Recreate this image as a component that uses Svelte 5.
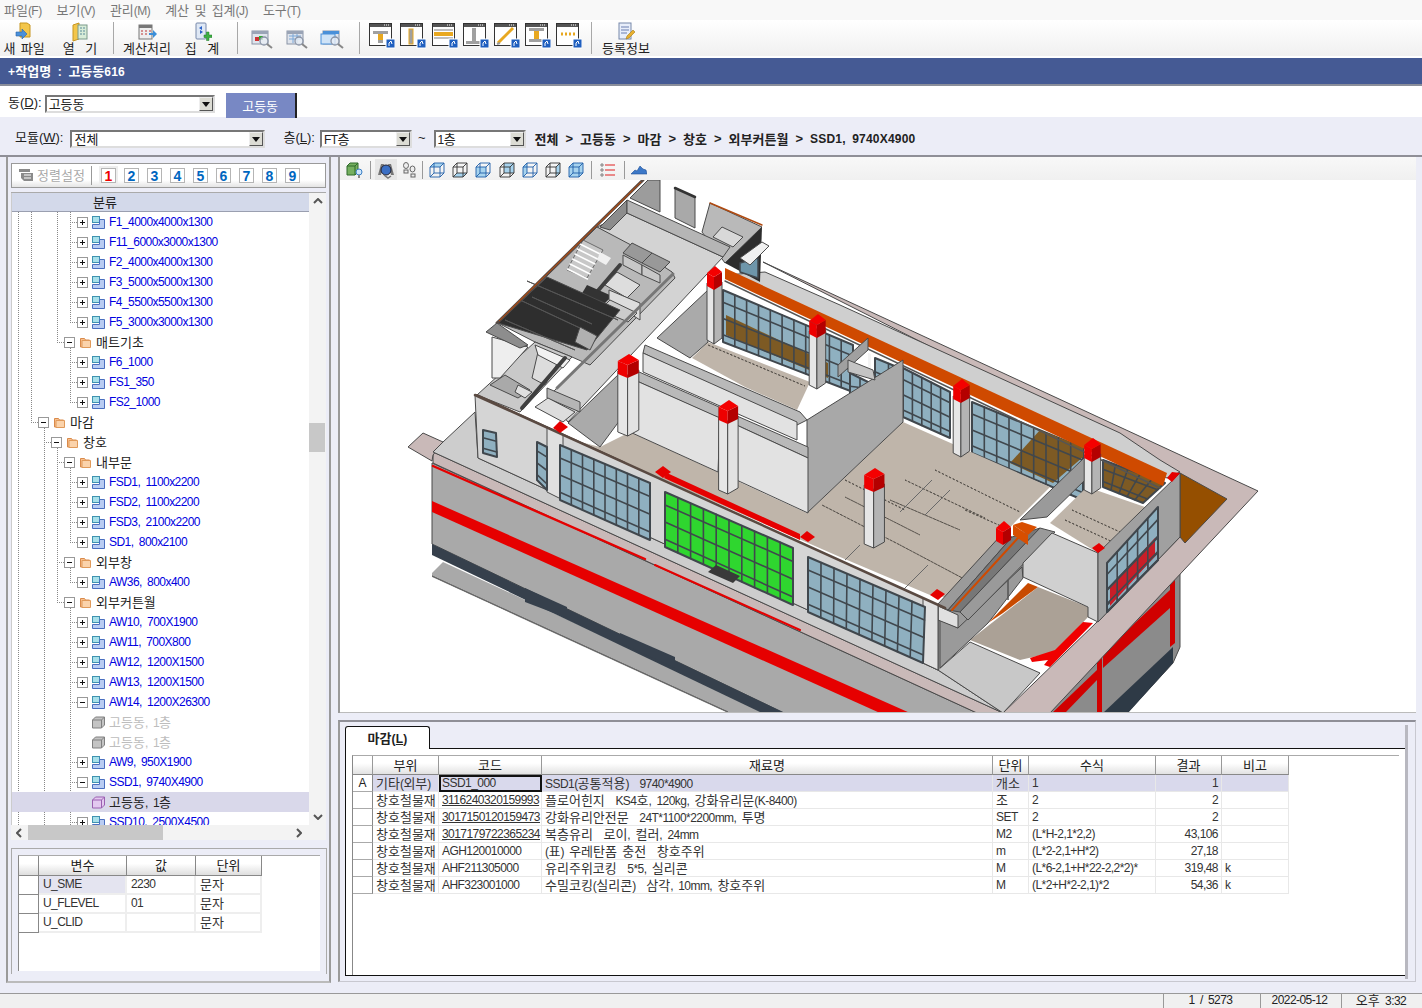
<script>
  const menus = ['파일(F)', '보기(V)', '관리(M)', '계산 및 집계(J)', '도구(T)'];

  // toolbar layout: w = cell width, kind decides the drawing
  const tools = [
    { w: 48, kind: 'newfile', label: '새 파일' },
    { w: 64, kind: 'open', label: '열  기' },
    { w: 2, kind: 'sep' },
    { w: 66, kind: 'calc', label: '계산처리' },
    { w: 44, kind: 'sum', label: '집  계' },
    { w: 14, kind: 'sep' },
    { w: 48, kind: 'find', n: 0 },
    { w: 22, kind: 'find', n: 1 },
    { w: 50, kind: 'find', n: 2 },
    { w: 2, kind: 'sep' },
    { w: 42, kind: 'win', n: 0 },
    { w: 20, kind: 'win', n: 1 },
    { w: 44, kind: 'win', n: 2 },
    { w: 18, kind: 'win', n: 3 },
    { w: 44, kind: 'win', n: 4 },
    { w: 18, kind: 'win', n: 5 },
    { w: 44, kind: 'win', n: 6 },
    { w: 2, kind: 'sep' },
    { w: 68, kind: 'info', label: '등록정보' }
  ];

  const crumbs = ['전체', '고등동', '마감', '창호', '외부커튼월', 'SSD1, 9740X4900'];

  const L = (t, x = '+') => ({ d: 3, k: 'leaf', t, x });
  const F = (d, t) => ({ d, k: 'folder', t, x: '-' });
  const rows = [
    L('F1_4000x4000x1300'), L('F11_6000x3000x1300'), L('F2_4000x4000x1300'), L('F3_5000x5000x1300'),
    L('F4_5500x5500x1300'), L('F5_3000x3000x1300'), F(2, '매트기초'), L('F6_1000'), L('FS1_350'), L('FS2_1000'),
    F(0, '마감'), F(1, '창호'), F(2, '내부문'), L('FSD1, 1100x2200'), L('FSD2, 1100x2200'), L('FSD3, 2100x2200'),
    L('SD1, 800x2100'), F(2, '외부창'), L('AW36, 800x400'), F(2, '외부커튼월'), L('AW10, 700X1900'),
    L('AW11, 700X800'), L('AW12, 1200X1500'), L('AW13, 1200X1500'), L('AW14, 1200X26300', '-'),
    { d: 3, k: 'cube', t: '고등동, 1층', off: true }, { d: 3, k: 'cube', t: '고등동, 1층', off: true },
    L('AW9, 950X1900'), L('SSD1, 9740X4900', '-'), { d: 3, k: 'cube', t: '고등동, 1층', sel: true },
    L('SSD10, 2500X4500')
  ];

  // dotted guide lines of the tree: [x, y1, y2]
  const guides = [
    [6, 0, 625], [19, 0, 210], [32, 216, 625], [45, 0, 130], [45, 236, 390],
    [58, 0, 110], [58, 136, 190], [58, 256, 330], [58, 356, 370], [58, 396, 625]
  ];
  const links = rows
    .map((r, i) => ({ r, y: 10 + 20 * i }))
    .filter((o) => o.r.x)
    .map((o) => ({ x1: 66 - (3 - o.r.d) * 13 - 8, x2: 66 - (3 - o.r.d) * 13, y: o.y }));

  const vars = [
    ['U_SME', '2230', '문자'],
    ['U_FLEVEL', '01', '문자'],
    ['U_CLID', '', '문자']
  ];

  const items = [
    ['A', '기타(외부)', 'SSD1_000', 'SSD1(공통적용)  9740*4900', '개소', '1', '1', ''],
    ['', '창호철물재', '3116240320159993', '플로어힌지  KS4호, 120kg, 강화유리문(K-8400)', '조', '2', '2', ''],
    ['', '창호철물재', '3017150120159473', '강화유리안전문  24T*1100*2200mm, 투명', 'SET', '2', '2', ''],
    ['', '창호철물재', '3017179722365234', '복층유리  로이, 컬러, 24mm', 'M2', '(L*H-2,1*2,2)', '43,106', ''],
    ['', '창호철물재', 'AGH120010000', '(표) 우레탄폼 충전  창호주위', 'm', '(L*2-2,1+H*2)', '27,18', ''],
    ['', '창호철물재', 'AHF211305000', '유리주위코킹  5*5, 실리콘', 'M', '(L*6-2,1+H*22-2,2*2)*', '319,48', 'k'],
    ['', '창호철물재', 'AHF323001000', '수밀코킹(실리콘)  삼각, 10mm, 창호주위', 'M', '(L*2+H*2-2,1)*2', '54,36', 'k']
  ];

  const runs = (s) => (s.match(/[가-힣]+|[^가-힣]+/g) || []).map((p) => ({ s: p, ko: /[가-힣]/.test(p) }));

  // ----- 3D view, painted back to front -----
  const P = (f, p, s = '#4a4a4a', w = 1, dash = '') => ({ f, p, s, w, dash });
  const N = (f, p) => P(f, p, 'none', 0);
  const D = (p) => P('none', p, '#55504a', 1, '2 2');

  // a = top left, b = top right, c = bottom right, d = bottom left
  function win(a, b, c, d, cols, rows, fill = '#8fb0c0', over = '') {
    const mix = (p, q, t) => [p[0] + (q[0] - p[0]) * t, p[1] + (q[1] - p[1]) * t];
    const txt = (p) => p[0].toFixed(1) + ',' + p[1].toFixed(1);
    const out = [P(fill, [a, b, c, d].map(txt).join(' '), '#40474d', 2)];
    if (over) out.push(N('#7d5a24', over));
    for (let i = 1; i < cols; i++) out.push(P('none', txt(mix(a, b, i / cols)) + ' ' + txt(mix(d, c, i / cols)), '#40474d', 1.6));
    for (let i = 1; i <= rows; i++) {
      const t = (i - 0.25) / (rows + 0.2);
      out.push(P('none', txt(mix(a, d, t)) + ' ' + txt(mix(b, c, t)), '#40474d', 1.6));
    }
    return out;
  }

  function col(x, y, yb, s = 1, side = '#b4b4b4') {
    const X = (v) => x + v * s;
    const out = [];
    if (yb) {
      out.push(P('#e6e6e6', `${X(-8)},${y + 8} ${X(-1)},${y + 12} ${X(-1)},${yb + 4} ${X(-8)},${yb}`));
      out.push(P(side, `${X(-1)},${y + 12} ${X(7)},${y + 7} ${X(7)},${yb - 2} ${X(-1)},${yb + 4}`));
    }
    out.push(N('#ee0000', `${X(-8)},${y - 2} ${X(-1)},${y + 2} ${X(-1)},${y + 15} ${X(-8)},${y + 11}`));
    out.push(N('#b40000', `${X(-1)},${y + 2} ${X(7)},${y - 3} ${X(7)},${y + 10} ${X(-1)},${y + 15}`));
    out.push(N('#f40000', `${X(-8)},${y - 2} ${X(0)},${y - 9} ${X(7)},${y - 3} ${X(-1)},${y + 2}`));
    return out;
  }

  const scene = [
    // lower right outside
    P('#8b8b8b', '1050,713 1097,660 1173,577 1180,573 1180,647 1173,663 1127,713'),
    N('#2e3a46', '1103,713 1173,647 1173,663 1128,713'),
    N('#d00000', '1103,653 1170,590 1170,608 1103,668'),
    N('#d00000', '1052,713 1097,670 1097,680 1065,713'),
    N('#d00000', '1170,580 1175,577 1175,643 1170,647'),
    N('#d00000', '1097,657 1102,652 1102,713 1097,713'),
    // front body
    N('#a9a9a9', '443,562 432,573 432,577 728,713 770,713'),
    P('none', '432,576 728,712', '#666', 1),
    P('#a9a9a9', '432,463 977,713 784,713 432,544'),
    N('#36404c', '432,544 432,555 762,713 785,713'),
    N('#36404c', '525,588 567,607 567,618 525,602'),
    N('#36404c', '620,633 675,657 675,668 620,643'),
    N('#e60000', '432,501 910,713 880,713 432,512'),
    // pink plate and ledge
    P('#c9b9b8', '763,262 1258,491 1050,713 1003,713 1097,622 1180,537 1180,473'),
    P('#c9b9b8', '433,452 1003,713 977,713 433,463'),
    P('#c9b9b8', '408,447 423,433 443,442 433,455 432,461'),
    P('none', '433,466 645,559', '#e60000', 2.4),
    P('none', '655,565 800,630', '#e60000', 2),
    P('#cdcdcd', '433,452 443,442 475,412 478,458 938,670 1003,713'),
    // brown pit at the far corner
    P('#954f00', '1180,473 1227,499 1185,543 1180,537'),
    // top gray slab
    P('#cfcfcf', '765,272 840,305 1000,378 1120,433 1160,460 1180,472 1167,478 725,275'),
    // big room back windows
    ...win([903, 368], [950, 392], [950, 438], [903, 417], 5, 3),
    ...win([972, 402], [1083, 448], [1083, 500], [972, 453], 9, 3, '#8fb0c0', '1010,463 1040,430 1083,447 1083,457 1053,483'),
    ...win([723, 290], [853, 345], [853, 392], [723, 342], 11, 3, '#8fb0c0', '726,315 828,363 828,378 726,335'),
    ...win([1103, 460], [1165, 483], [1143, 503], [1103, 487], 5, 2, '#7d5a24'),
    ...win([875, 358], [902, 369], [902, 392], [875, 380], 2, 1),
    N('#f4f4f4', '868,353 871,354 871,368 868,367'),
    ...win([850, 373], [870, 383], [870, 400], [850, 412], 2, 2),
    // orange band
    N('#cf4a00', '725,268 1167,473 1163,486 725,279'),
    P('none', '725,281 1160,488', '#555', 1.5),
    // floors
    N('#bfb5aa', '600,447 630,432 807,513 903,422 1050,487 1017,520 945,597 930,595 840,557 573,440'),
    N('#bfb5aa', '1050,523 1087,487 1145,507 1098,553'),
    N('#bfb5aa', '692,358 708,342 810,382 797,410 745,387'),
    D('708,345 805,386'),
    D('845,480 905,510'), D('845,497 920,535'), D('905,480 985,518'), D('935,470 1020,512'),
    D('822,505 900,545'), D('900,545 985,590'), D('890,500 960,530'), D('965,510 1010,530'),
    D('1065,520 1115,543'), D('1072,510 1120,532'),
    P('none', '928,565 898,595', '#666', 0.8), P('none', '950,490 925,515', '#666', 0.8),
    P('none', '932,480 900,512', '#666', 0.8), P('none', '860,545 845,560', '#666', 0.8),
    // room partition walls
    P('#a8a8a8', '807,420 903,360 903,422 807,513'),
    P('#9a9a9a', '1085,457 1085,480 1047,517 1020,520'),
    P('#aaaaaa', '657,338 708,290 708,342 690,358'),
    P('#aaaaaa', '568,423 620,373 620,420 600,447'),
    P('#b9b9b9', '645,345 800,412 807,420 797,425 643,353'),
    P('#e2e2e2', '643,353 797,422 797,440 643,372'),
    P('#b9b9b9', '630,368 719,407 719,418 630,378'),
    P('#e2e2e2', '630,378 720,418 718,472 630,432'),
    P('#b9b9b9', '730,413 808,447 808,458 730,422'),
    P('#e2e2e2', '730,422 808,458 808,513 730,477'),
    // small back walls
    P('#a0a0a0', '838,365 868,338 868,350 838,377'),
    P('#c4c4c4', '848,360 873,370 875,380 848,372'),
    // upper block: corridor and stair core
    P('#9c9c9c', '630,198 648,180 660,180 660,212'),
    P('#a9a9a9', '675,188 695,197 695,228 675,218'),
    P('none', '675,188 695,197', '#333', 2.5),
    P('#b9b9b9', '702,232 710,203 762,227 725,263'),
    P('#d8d8d8', '713,237 722,227 743,237 733,247'),
    N('#2d2d2d', '725,263 762,227 760,282'),
    P('none', '710,203 762,225', '#b04a10', 1.5),
    P('#6e96aa', '740,263 758,258 758,278 740,272', '#40474d', 1.5),
    P('#f0f0f0', '740,258 762,242 769,246 750,265'),
    P('#d3d3d3', '627,213 723,257 568,422 548,397 673,273 597,227'),
    P('#8c8c8c', '600,227 627,200 627,213 610,230'),
    P('#b5b5b5', '627,200 730,247 723,257 627,213'),
    P('#b9b9b9', '597,227 631,245 672,272 675,278 590,365 572,357 535,342 498,323 548,275'),
    // stairs
    P('#c8c8c8', '583,240 603,250 587,278 567,270', '#555', 0.8),
    ...[0, 1, 2, 3, 4, 5].map((i) => P('none', `${580 - i * 2.5},${244 + i * 5} ${600 - i * 2.5},${254 + i * 5}`, '#fff', 1.5)),
    N('#f0f0f0', '600,252 611,258 606,265 597,260'),
    P('none', '620,265 590,300', '#3f3f3f', 4),
    N('#333', '587,285 612,296 603,305 581,295'),
    P('#999', '623,253 632,243 652,253 642,263'),
    P('#999', '642,263 652,253 670,262 660,272'),
    P('#c8c8c8', '623,255 642,265 642,275 623,265'),
    P('#c8c8c8', '642,265 660,275 660,283 642,275'),
    P('#ddd', '617,272 640,285 627,298 605,285'),
    P('#ddd', '609,290 640,303 640,320 609,300'),
    P('#ccc', '610,300 637,313 628,322 600,310'),
    // dark roof
    P('#2e2e2e', '547,277 620,310 587,350 498,323'),
    P('none', '527,281 618,320', '#555', 1), P('none', '520,300 595,335', '#555', 1),
    P('none', '505,320 575,350', '#555', 1), P('none', '532,297 592,324', '#555', 1),
    P('#b0b0b0', '580,327 597,336 590,350 575,342'),
    P('none', '643,180 497,323', '#5a4a42', 3),
    P('none', '641,182 499,321', '#b04a10', 1),
    // lower left block
    P('#c9c9c9', '477,395 535,342 572,357 520,412'),
    P('#eeeeee', '492,337 528,347 500,378 492,378'),
    P('#8d8d8d', '486,332 497,323 528,345 520,348'),
    P('#dddddd', '538,352 558,362 545,385 532,378'),
    P('#f2f2f2', '535,345 570,360 563,368 538,355'),
    P('#a9a9a9', '505,375 530,390 518,398 490,385'),
    P('#e0e0e0', '518,385 532,392 525,398 515,392'),
    P('none', '565,358 522,408', '#3f3f3f', 4),
    P('none', '673,274 557,388', '#777', 3),
    P('#b5b5b5', '547,388 580,402 580,412 547,398'),
    P('#dddddd', '535,407 548,398 575,412 563,422'),
    P('none', '477,395 625,463', '#5a4a42', 2),
    // ramp and hall under the overhang
    P('#c8c8c8', '970,642 1040,673 1003,713 938,670'),
    N('#9a9a9a', '938,605 1023,530 1023,577 970,640 938,670'),
    N('#aba196', '970,640 1038,587 1088,607 1088,617 1055,652 1020,660'),
    N('#c84a00', '988,623 1028,583 1038,587 1003,613'),
    N('#f00000', '1083,622 1093,623 1050,667 1044,665 1048,660 1032,662 1030,658 1055,650'),
    P('#9a9a9a', '958,628 1022,567 1023,578 988,623 970,640 940,668 940,620'),
    P('none', '1008,580 1008,600', '#555', 1),
    P('#e0e0e0', '938,606 958,615 958,628 938,620'),
    P('#9a9a9a', '938,604 1003,533 1012,537 948,610'),
    P('#777777', '948,610 1012,537 1040,528 960,612'),
    P('none', '952,610 1018,538', '#cf4a00', 2),
    P('#9a9a9a', '960,612 1040,528 1055,532 968,620'),
    N('#d84e00', '1013,525 1022,522 1037,527 1028,535'),
    N('#d84e00', '1013,525 1028,535 1028,545 1013,535'),
    // right room
    P('#d0d0d0', '1052,533 1098,553 1098,622 1088,617 1088,607 1023,577 1023,563'),
    P('#a0a0a0', '1098,553 1180,473 1180,537 1098,622'),
    ...win([1107, 563], [1158, 507], [1158, 560], [1107, 612], 5, 3, '#8fb0c0', ''),
    N('#c81e28', '1110,606 1155,556 1155,538 1110,588'),
    ...win([1107, 590], [1158, 537], [1158, 560], [1107, 612], 5, 1, 'none'),
    // front wall and its windows
    P('#d5d5d5', '475,395 938,605 938,670 478,458'),
    P('#e0e0e0', '547,427 563,434 563,500 547,492'),
    P('#e0e0e0', '923,598 938,605 938,670 923,663'),
    P('none', '475,395 945,608', '#5a4a42', 2.5),
    N('#e60000', '667,473 800,534 800,540 664,478'),
    ...win([483, 430], [496, 433], [497, 457], [483, 453], 1, 2),
    ...win([537, 442], [547, 447], [547, 490], [537, 480], 1, 3),
    ...win([560, 445], [650, 483], [650, 540], [560, 500], 8, 3),
    ...win([665, 492], [793, 548], [793, 605], [665, 547], 10, 3, '#2fd62f'),
    N('#3a3a3a', '708,572 733,583 740,576 716,565'),
    ...win([808, 557], [925, 607], [923, 663], [808, 612], 9, 3),
    // columns, painted last
    ...col(715, 275, 340),
    ...col(818, 323, 385, 1.1),
    ...col(629, 363, 432, 1.4, '#e2e2e2'),
    ...col(729, 409, 490, 1.3, '#e2e2e2'),
    ...col(962, 388, 453, 1.1),
    ...col(1093, 447, 490, 1.1),
    ...col(875, 477, 544, 1.35),
    ...col(1004, 530, 0, 1),
    N('#e60000', '930,595 937,589 945,594 938,600'),
    N('#e60000', '1092,548 1099,543 1105,548 1098,553'),
    N('#e60000', '553,428 560,421 568,427 560,433'),
    N('#e60000', '655,472 663,466 671,472 663,478'),
    N('#e60000', '800,537 807,531 815,537 808,542'),
    N('#e60000', '1167,478 1172,472 1180,473 1172,482')
  ];
</script>

{#snippet t(s)}{#each runs(s) as r}<span class={r.ko ? 'ko' : 'la'}>{r.s}</span>{/each}{/snippet}

{#snippet drop(s, cls)}
  <div class="select {cls}">
    <span class="sel-text">{@render t(s)}</span>
    <span class="sel-btn"><svg width="8" height="5" viewBox="0 0 8 5"><path d="M0 0h8L4 5z" fill="#111" /></svg></span>
  </div>
{/snippet}

{#snippet toolIcon(tool)}
  {#if tool.kind === 'newfile'}
    <svg width="20" height="20" viewBox="0 0 20 20"><path d="M6 1h7l3 2v12H6z" fill="#f3c64a" stroke="#c79620" /><path d="M2 10h6V7l5 5-5 5v-3H2z" fill="#4a90d9" stroke="#2a62a8" stroke-width=".6" /></svg>
  {:else if tool.kind === 'open'}
    <svg width="20" height="20" viewBox="0 0 20 20"><path d="M3 3l6-2v16l-6 2z" fill="#f3c64a" stroke="#c79620" /><rect x="8" y="3" width="9" height="14" fill="#d8ecd8" stroke="#7a9a8a" /><path d="M10 6h5M10 9h5M10 12h5" stroke="#5a8a9a" stroke-dasharray="2 1" /></svg>
  {:else if tool.kind === 'calc'}
    <svg width="20" height="20" viewBox="0 0 20 20"><rect x="2" y="3" width="13" height="14" fill="#eee" stroke="#777" /><rect x="2" y="3" width="13" height="3" fill="#777" /><path d="M4 9h2M8 9h2M12 9h2M4 12h2M8 12h2" stroke="#b33" /><path d="M12 11h4V8l4 4-4 4v-3h-4z" fill="#3b8ed8" /></svg>
  {:else if tool.kind === 'sum'}
    <svg width="20" height="20" viewBox="0 0 20 20"><rect x="4" y="1" width="10" height="16" rx="1" fill="#dfe8f5" stroke="#7788aa" /><path d="M7 6l3-2v4zM11 10l-3 2V8z" fill="#2a62c8" /><path d="M12 13h2.500v-3h2.500v3h3v2.500h-3v3h-2.500v-3H12z" fill="#3cb043" stroke="#1d7a26" stroke-width=".5" /></svg>
  {:else if tool.kind === 'find'}
    <svg class="find-svg" width="26" height="20" viewBox="0 0 26 20"><rect x="3" y="2" width="16" height="13" fill="#dfe4ec" stroke="#8a94a6" /><rect x="3" y="2" width="16" height="3" fill={tool.n === 2 ? '#4a90d9' : '#9aa4b6'} />{#if tool.n === 0}<rect x="6" y="8" width="4" height="4" fill="#c33" /><rect x="10" y="7" width="4" height="4" fill="#3a3" />{:else if tool.n === 1}<path d="M5 7h12M5 10h12M9 5v9M13 5v9" stroke="#7aa7d8" />{:else}<rect x="1" y="5" width="14" height="10" fill="#cfe3f7" stroke="#4a90d9" />{/if}<circle cx="15" cy="12" r="4" fill="#e8eef5" fill-opacity=".8" stroke="#8a94a6" stroke-width="1.300" /><path d="M18 15l5 4" stroke="#888" stroke-width="2" /></svg>
  {:else if tool.kind === 'win'}
    <svg class="win-svg" width="26" height="26" viewBox="0 0 26 26">
      <rect x=".5" y=".5" width="22" height="22" fill="#fff" stroke="#333" />
      <rect x="1" y="1" width="21" height="3" fill="#555" />
      <path d="M15 2h1M17 2h1M19 2h1" stroke="#fff" />
      {#if tool.n === 0}<path d="M4 8h15v3h-5v9H9v-9H4z" fill="#a0a0a0" /><rect x="9" y="11" width="5" height="6" fill="#e8a820" />
      {:else if tool.n === 1}<rect x="9" y="6" width="4" height="15" fill="#a0a0a0" stroke="#e8a820" />
      {:else if tool.n === 2}<rect x="2" y="9" width="19" height="4" fill="#e8a820" /><path d="M2 7h19M2 15h19" stroke="#aaa" stroke-width="1.500" />
      {:else if tool.n === 3}<path d="M9 5h4v13h7v3H3v-3h6z" fill="#a0a0a0" />
      {:else if tool.n === 4}<path d="M4 20L19 5" stroke="#e8a820" stroke-width="3" /><path d="M3 21l3-1" stroke="#999" stroke-width="2" />
      {:else if tool.n === 5}<path d="M4 5h15v3h-5v8h5v3H4v-3h5V8H4z" fill="#a0a0a0" /><rect x="9" y="8" width="5" height="8" fill="#e8a820" />
      {:else}<path d="M5 11h2M9 11h2M13 11h2M17 11h2" stroke="#e8a820" stroke-width="3" />{/if}
      <rect x="17" y="16" width="9" height="9" fill="#1f5fbf" stroke="#fff" />
      <path d="M20 23v-3l2-2 1 3" stroke="#fff" fill="none" />
    </svg>
  {:else if tool.kind === 'info'}
    <svg width="20" height="20" viewBox="0 0 20 20"><rect x="3" y="1" width="12" height="16" fill="#e8eefa" stroke="#7788aa" /><path d="M5 5h8M5 8h8M5 11h6" stroke="#6a7fb0" /><path d="M10 17l1-3 6-6 2 2-6 6z" fill="#e8b030" stroke="#a67a10" stroke-width=".6" /></svg>
  {/if}
{/snippet}

{#snippet cubeBtn(n)}
  <svg width="16" height="16" viewBox="0 0 16 16">
    {#if n === 2}<path d="M1 5h10v10H1z" fill="#a7d3ee" />{/if}
    {#if n === 6}<path d="M1 5h10v10H1zM1 5l4-4h10l-4 4zM11 5l4-4v10l-4 4z" fill="#a7d3ee" />{/if}
    {#if n === 1}<path d="M1 15l4-4h10l-4 4z" fill="#a7d3ee" />{/if}
    {#if n === 0}<path d="M1 5l4-4h10l-4 4z" fill="#a7d3ee" />{/if}
    {#if n === 3}<path d="M5 1h10v10H5z" fill="#a7d3ee" />{/if}
    {#if n === 4}<path d="M1 5l4-4v10l-4 4z" fill="#a7d3ee" />{/if}
    {#if n === 5}<path d="M11 5l4-4v10l-4 4z" fill="#a7d3ee" />{/if}
    <path d="M1 5h10v10H1zM1 5l4-4h10v10l-4 4M11 5l4-4M5 1v10H15M5 11l-4 4" fill="none" stroke={n % 2 ? '#333' : '#1f5fa8'} stroke-width=".9" />
  </svg>
{/snippet}

<div class="app">
  <div class="menu">
    {#each menus as m}<span class="menu-item">{@render t(m)}</span>{/each}
  </div>

  <div class="toolbar">
    {#each tools as tool}
      {#if tool.kind === 'sep'}
        <div class="tool-sep" style="width:{tool.w}px"></div>
      {:else}
        <div class="tool" style="width:{tool.w}px">
          <div class="tool-icon">{@render toolIcon(tool)}</div>
          {#if tool.label}<div class="tool-label">{@render t(tool.label)}</div>{/if}
        </div>
      {/if}
    {/each}
  </div>

  <div class="title b">{@render t('+작업명 : 고등동616')}</div>

  <div class="dong-row">
    <span class="lbl">동(<u>D</u>):</span>
    {@render drop('고등동', 'sel-dong')}
    <div class="dong-tab">{@render t('고등동')}</div>
  </div>

  <div class="filter-row">
    <span class="lbl">모듈(<u>W</u>):</span>
    {@render drop('전체', 'sel-module')}
    <span class="lbl lbl-floor">층(<u>L</u>):</span>
    {@render drop('FT층', 'sel-floor')}
    <span class="lbl tilde">~</span>
    {@render drop('1층', 'sel-floor2')}
    <div class="crumbs b">
      {#each crumbs as c, i}
        {#if i > 0}<span class="crumb-sep">&gt;</span>{/if}
        <span>{@render t(c)}</span>
      {/each}
    </div>
  </div>

  <div class="main">
    <div class="left">
      <div class="sortbar">
        <svg class="sort-icon" width="18" height="16" viewBox="0 0 18 16"><path d="M1 1h11v3H1zM3 5h12v8H6l-3-3z" fill="#8a8a8a" /><path d="M6 7h7M6 10h7" stroke="#fff" /></svg>
        <span class="sort-label">{@render t('정렬설정')}</span>
        <span class="sort-sep"></span>
        {#each [1, 2, 3, 4, 5, 6, 7, 8, 9] as n}
          <span class="sort-num" class:first={n === 1}>{n}</span>
        {/each}
      </div>

      <div class="treebox">
        <div class="tree-main">
          <div class="tree-head">{@render t('분류')}</div>
          <div class="tree-body">
            <svg class="tree-lines" width="297" height="625">
              {#each guides as g}<line x1={g[0] + 0.5} x2={g[0] + 0.5} y1={g[1]} y2={g[2]} />{/each}
              {#each links as l}<line x1={l.x1} x2={l.x2} y1={l.y + 0.5} y2={l.y + 0.5} />{/each}
            </svg>
            {#each rows as r}
              <div class="row" class:sel={r.sel} class:off={r.off} class:leaf={r.k === 'leaf'} style="padding-left:{66 - (3 - r.d) * 13}px">
                <span class="box" class:none={!r.x}>
                  {#if r.x}<svg width="9" height="9" viewBox="0 0 9 9"><path d={r.x === '+' ? 'M2 4.500h5M4.500 2v5' : 'M2 4.500h5'} stroke="#111" /></svg>{/if}
                </span>
                <span class="node">
                  {#if r.k === 'folder'}
                    <svg width="13" height="13" viewBox="0 0 13 13"><path d="M1.500 2.500h4l1 1.500h4v7h-9z" fill="#f9c08e" stroke="#d98a4a" /><path d="M3 4.500h8.500v7H3z" fill="#fbd3ab" stroke="#e09a5a" /></svg>
                  {:else if r.k === 'leaf'}
                    <svg width="13" height="13" viewBox="0 0 13 13"><rect x=".5" y=".5" width="7" height="6" fill="#a8e0ea" stroke="#3f93b0" /><path d="M.5 8.500h7v-5h5v9h-12z" fill="#b9ccf2" stroke="#4a6fc0" /></svg>
                  {:else}
                    <svg width="13" height="13" viewBox="0 0 13 13"><path d="M.5 4l3-3h9v8l-3 3h-9z" fill={r.sel ? '#e3c8f0' : '#c4c4c4'} stroke={r.sel ? '#9a5fb0' : '#808080'} /><path d="M.5 4h9v8M9.500 4l3-3" fill="none" stroke={r.sel ? '#9a5fb0' : '#808080'} /></svg>
                  {/if}
                </span>
                <span class="row-text">{@render t(r.t)}</span>
              </div>
            {/each}
          </div>
        </div>
        <div class="vscroll">
          <svg width="10" height="6" viewBox="0 0 10 6"><path d="M1 5l4-4 4 4" fill="none" stroke="#555" stroke-width="2" /></svg>
          <div class="vtrack"><div class="vthumb"></div></div>
          <svg width="10" height="6" viewBox="0 0 10 6"><path d="M1 1l4 4 4-4" fill="none" stroke="#555" stroke-width="2" /></svg>
        </div>
        <div class="hscroll">
          <svg width="6" height="10" viewBox="0 0 6 10"><path d="M5 1L1 5l4 4" fill="none" stroke="#555" stroke-width="2" /></svg>
          <div class="hthumb"></div>
          <svg width="6" height="10" viewBox="0 0 6 10"><path d="M1 1l4 4-4 4" fill="none" stroke="#555" stroke-width="2" /></svg>
        </div>
      </div>

      <div class="varbox">
        <div class="vargrid">
          <div class="vrow vhead">
            <span class="vc c0"></span><span class="vc c1">{@render t('변수')}</span><span class="vc c2">{@render t('값')}</span><span class="vc c3">{@render t('단위')}</span>
          </div>
          {#each vars as v, i}
            <div class="vrow">
              <span class="vc c0 rowhead"></span>
              <span class="vc c1 data" class:cur={i === 0}>{@render t(v[0])}</span>
              <span class="vc c2 data">{@render t(v[1])}</span>
              <span class="vc c3 data">{@render t(v[2])}</span>
            </div>
          {/each}
        </div>
      </div>
    </div>

    <div class="right">
      <div class="view">
        <div class="view-tools">
          <span class="vt vt-first">
            <svg width="18" height="18" viewBox="0 0 18 18"><path d="M1 5l3-3h8v9l-3 3H1z" fill="#76b060" stroke="#2f6b2a" /><path d="M1 5h8v9M9 5l3-3" fill="none" stroke="#2f6b2a" /><circle cx="13" cy="11" r="3" fill="#cfe6fb" stroke="#3b7fc4" /><rect x="12" y="14" width="2" height="3" fill="#888" /></svg>
          </span>
          <span class="vsep"></span>
          <span class="vt vt-on">
            <svg width="18" height="18" viewBox="0 0 18 18"><path d="M4 3h3l-3 11H1zM11 3h3l3 11h-3z" fill="#777" /><circle cx="9" cy="9" r="5" fill="#3b6fc4" stroke="#223" /><path d="M7 14l4 3 3-2" fill="none" stroke="#777" stroke-width="1.500" /></svg>
          </span>
          <span class="vt vt-feet">
            <svg width="16" height="16" viewBox="0 0 16 16"><ellipse cx="5" cy="3.500" rx="2.500" ry="3" fill="#eee" stroke="#666" /><rect x="3" y="8" width="4" height="3" fill="#eee" stroke="#666" /><ellipse cx="11.500" cy="7" rx="2.500" ry="3" fill="#eee" stroke="#666" /><rect x="10" y="12" width="4" height="3" fill="#eee" stroke="#666" /></svg>
          </span>
          <span class="vsep vsep-cubes"></span>
          {#each [0, 1, 2, 3, 4, 5, 6] as n}
            <span class="vt vt-cube">{@render cubeBtn(n)}</span>
          {/each}
          <span class="vsep vsep-lines"></span>
          <span class="vt vt-lines">
            <svg width="16" height="14" viewBox="0 0 16 14"><path d="M5 2h10M5 7h10M5 12h10" stroke="#e02020" /><path d="M1 1h2v2H1zM1 6h2v2H1zM1 11h2v2H1z" fill="#fff" stroke="#555" stroke-width=".7" /></svg>
          </span>
          <span class="vsep"></span>
          <span class="vt vt-hill">
            <svg width="16" height="10" viewBox="0 0 16 10"><path d="M0 9l4-4 2 1 3-5 3 3 3 1 1 4z" fill="#3c78c8" stroke="#1f4f96" stroke-width=".6" /></svg>
          </span>
        </div>
        <div class="canvas">
          <svg width="1076" height="533" viewBox="340 180 1076 533">
            {#each scene as o}
              <polygon points={o.p} fill={o.f} stroke={o.s} stroke-width={o.w} stroke-dasharray={o.dash} stroke-linejoin="round" />
            {/each}
          </svg>
        </div>
      </div>

      <div class="bottom">
        <div class="tabs"><div class="tab b">{@render t('마감(')}<u>{@render t('L')}</u>{@render t(')')}</div></div>
        <div class="pane">
          <div class="tbl">
            <div class="trow thead">
              <span class="tc r0"></span>
              <span class="tc r1">{@render t('부위')}</span>
              <span class="tc r2">{@render t('코드')}</span>
              <span class="tc r3">{@render t('재료명')}</span>
              <span class="tc r4">{@render t('단위')}</span>
              <span class="tc r5">{@render t('수식')}</span>
              <span class="tc r6">{@render t('결과')}</span>
              <span class="tc r7">{@render t('비고')}</span>
            </div>
            {#each items as it, i}
              <div class="trow" class:cur={i === 0}>
                <span class="tc r0 rh">{it[0]}</span>
                <span class="tc r1 d">{@render t(it[1])}</span>
                <span class="tc r2 d" class:focus={i === 0} class:under={i > 0 && i < 4}>{@render t(it[2])}</span>
                <span class="tc r3 d">{@render t(it[3])}</span>
                <span class="tc r4 d">{@render t(it[4])}</span>
                <span class="tc r5 d">{@render t(it[5])}</span>
                <span class="tc r6 d num">{@render t(it[6])}</span>
                <span class="tc r7 d">{@render t(it[7])}</span>
              </div>
            {/each}
          </div>
        </div>
        <div class="side-strip"></div>
      </div>
    </div>
  </div>

  <div class="status">
    <span class="st st1">{@render t('1 / 5273')}</span>
    <span class="st st2">{@render t('2022-05-12')}</span>
    <span class="st st3">{@render t('오후 3:32')}</span>
  </div>
</div>

<style>
  :global(body) {
    margin: 0;
    background: #f0f0f0;
  }

  .app {
    width: 1422px;
    height: 1008px;
    display: flex;
    flex-direction: column;
    overflow: hidden;
    color: #222;
    font-family: 'Liberation Sans', 'Noto Sans CJK KR', sans-serif;
    font-size: 12px;
    line-height: 16px;
  }

  .ko {
    font-family: 'Noto Sans CJK KR', sans-serif;
    font-size: 13px;
    white-space: pre;
  }

  .la {
    font-family: 'Liberation Sans', sans-serif;
    font-size: 12px;
    letter-spacing: -0.55px;
    word-spacing: 2.5px;
    white-space: pre;
  }

  .b .ko,
  .b .la {
    font-weight: 700;
  }

  .b .la {
    letter-spacing: 0.2px;
    word-spacing: 3px;
  }

  /* menu + toolbar */
  .menu {
    height: 20px;
    flex: none;
    display: flex;
    align-items: center;
    gap: 15px;
    padding-left: 4px;
    background: #f8f8f8;
    color: #777;
    box-sizing: border-box;
  }

  .toolbar {
    height: 37px;
    flex: none;
    display: flex;
    background: linear-gradient(#ffffff, #f0f0f0);
    border-bottom: 1px solid #fff;
    box-sizing: border-box;
  }

  .tool {
    display: flex;
    flex-direction: column;
    align-items: center;
    justify-content: flex-start;
    height: 36px;
    overflow: visible;
  }

  .tool-icon {
    height: 20px;
    margin-top: 2px;
    display: flex;
    align-items: center;
    justify-content: center;
  }

  .find-svg {
    margin-top: 13px;
  }

  .win-svg {
    margin: 7px 0 0 2px;
  }

  .tool-label {
    white-space: pre;
    line-height: 14px;
    margin-top: -1px;
    color: #222;
  }

  .tool-sep {
    flex: none;
    height: 32px;
    margin-top: 2px;
    border-right: 1px solid #a8a8a8;
    box-sizing: border-box;
  }

  .title {
    height: 29px;
    flex: none;
    box-sizing: border-box;
    padding: 5px 0 0 8px;
    background: #455a94;
    border-top: 1px solid #fff;
    border-bottom: 2px solid #8a8e9a;
    color: #fff;
  }

  /* selectors */
  .dong-row {
    height: 32px;
    flex: none;
    display: flex;
    align-items: flex-start;
    padding-left: 8px;
    background: #fff;
    box-sizing: border-box;
    position: relative;
    border-bottom: 1px solid #ecedf7;
  }

  .lbl {
    white-space: pre;
    color: #222;
    font-family: 'Liberation Sans', 'Noto Sans CJK KR', sans-serif;
    font-size: 13px;
    line-height: 18px;
    margin-top: 8px;
  }

  .select {
    height: 18px;
    box-sizing: border-box;
    background: #fff;
    border: 2px solid;
    border-color: #777 #ddd #ddd #777;
    display: flex;
    justify-content: space-between;
    align-items: center;
    padding-left: 2px;
    margin-top: 9px;
  }

  .sel-btn {
    width: 14px;
    height: 14px;
    background: #dcdcd4;
    border: 1px solid;
    border-color: #eee #555 #555 #eee;
    box-sizing: border-box;
    display: flex;
    align-items: center;
    justify-content: center;
  }

  .sel-dong {
    width: 170px;
    margin-left: 3px;
  }

  .dong-tab {
    width: 70px;
    height: 25px;
    margin: 7px 0 0 11px;
    background: #7888c4;
    color: #fff;
    display: flex;
    align-items: center;
    justify-content: center;
    border-right: 1px solid #222;
    box-shadow: 1px 0 0 #222;
    box-sizing: border-box;
  }

  .filter-row {
    height: 39px;
    flex: none;
    display: flex;
    align-items: flex-start;
    padding: 3px 0 0 15px;
    background: #ecedf7;
    box-sizing: border-box;
    border-bottom: 2px solid #8f8f97;
  }

  .sel-module {
    width: 195px;
    margin-left: 7px;
  }

  .lbl-floor {
    margin-left: 18px;
  }

  .sel-floor {
    width: 92px;
    margin-left: 5px;
  }

  .sel-floor2 {
    width: 92px;
  }

  .tilde {
    margin-left: 6px;
    margin-right: 8px;
  }

  .crumbs {
    display: flex;
    gap: 6px;
    margin: 10px 0 0 9px;
    white-space: pre;
  }

  .crumb-sep {
    font-weight: 700;
    font-size: 13px;
    margin: 0 1px;
  }

  /* main area */
  .main {
    flex: 1;
    min-height: 0;
    display: flex;
    background: #ecedf7;
    padding-bottom: 10px;
  }

  .left {
    width: 325px;
    margin-left: 6px;
    border-left: 2px solid #9a9a9a;
    border-right: 2px solid #9a9a9a;
    border-bottom: 2px solid #bbb;
    box-sizing: border-box;
    padding: 6px 0 0 3px;
    display: flex;
    flex-direction: column;
    flex: none;
  }

  .sortbar {
    width: 315px;
    height: 25px;
    flex: none;
    box-sizing: border-box;
    background: linear-gradient(#fff 70%, #e4e4e4);
    border: 1px solid #9a9a9a;
    display: flex;
    align-items: center;
    padding-left: 6px;
  }

  .sort-label {
    color: #aaa;
    margin-left: 1px;
  }

  .sort-sep {
    width: 1px;
    height: 19px;
    background: #999;
    margin: 0 9px 0 6px;
  }

  .sort-num {
    width: 15px;
    height: 15px;
    margin-right: 8px;
    box-sizing: border-box;
    border: 1px solid #b5b5b5;
    color: #0066c0;
    font-weight: 700;
    font-size: 14px;
    line-height: 14px;
    text-align: center;
    background: #fff;
  }

  .sort-num.first {
    color: #ee0000;
    box-shadow: 0 0 0 2px #eee;
  }

  .treebox {
    margin-top: 4px;
    width: 315px;
    height: 648px;
    flex: none;
    display: grid;
    grid-template-columns: 298px 17px;
    grid-template-rows: 632px 15px;
    background: #f0f0f0;
    border-top: 1px solid #aaa;
    box-sizing: border-box;
  }

  .tree-main {
    min-height: 0;
    overflow: hidden;
    background: #fff;
    display: flex;
    flex-direction: column;
    border-left: 1px solid #ccc;
  }

  .tree-head {
    height: 19px;
    flex: none;
    background: #d3d9ea;
    border-bottom: 1px solid #9a9fb0;
    box-sizing: border-box;
    padding-left: 81px;
    line-height: 18px;
  }

  .tree-body {
    position: relative;
    flex: 1;
    min-height: 0;
    overflow: hidden;
  }

  .tree-lines {
    position: absolute;
    left: 0;
    top: 0;
  }

  .tree-lines line {
    stroke: #888;
    stroke-dasharray: 1 1;
  }

  .row {
    position: relative;
    height: 20px;
    display: flex;
    align-items: center;
    box-sizing: border-box;
  }

  .row.sel {
    background: #d9d8ea;
  }

  .row.off {
    color: #bdbdbd;
  }

  .row.leaf {
    color: #0000e0;
  }

  .box {
    width: 9px;
    height: 9px;
    flex: none;
    display: flex;
    outline: 1px solid #999;
    background: #fff;
    margin-right: 5px;
  }

  .box.none {
    visibility: hidden;
  }

  .node {
    width: 13px;
    height: 13px;
    flex: none;
    margin-right: 4px;
  }

  .row-text {
    white-space: pre;
  }

  .vscroll {
    grid-row: 1;
    grid-column: 2;
    display: flex;
    flex-direction: column;
    align-items: center;
    padding: 5px 0;
    box-sizing: border-box;
    justify-content: space-between;
    background: #f3f3f3;
  }

  .vtrack {
    flex: 1;
    width: 100%;
    padding-top: 219px;
  }

  .vthumb {
    width: 16px;
    height: 29px;
    background: #c8c8c8;
  }

  .hscroll {
    grid-row: 2;
    grid-column: 1 / 3;
    display: flex;
    align-items: center;
    padding: 0 24px 0 5px;
    background: #f3f3f3;
    justify-content: space-between;
    position: relative;
  }

  .hthumb {
    position: absolute;
    left: 17px;
    top: 0;
    width: 135px;
    height: 15px;
    background: #c8c8c8;
  }

  .varbox {
    margin-top: 8px;
    width: 316px;
    height: 126px;
    box-sizing: border-box;
    border: 1px solid #aaa;
    border-bottom: none;
    padding: 6px 6px 4px 6px;
    background: #ecedf7;
    flex: none;
  }

  .vargrid {
    height: 116px;
    background: #fff;
    border-left: 1px solid #888;
    border-top: 1px solid #aaa;
    box-sizing: border-box;
  }

  .vrow {
    display: flex;
    height: 19px;
  }

  .vhead {
    height: 20px;
  }

  .vc {
    box-sizing: border-box;
    white-space: pre;
  }

  .vhead .vc {
    background: linear-gradient(#fff 40%, #dedede);
    border-right: 1px solid #888;
    border-bottom: 1px solid #888;
    text-align: center;
    line-height: 18px;
  }

  .c0 {
    width: 20px;
  }

  .c1 {
    width: 88px;
  }

  .c2 {
    width: 69px;
  }

  .c3 {
    width: 66px;
  }

  .rowhead {
    border-right: 1px solid #888;
    border-bottom: 1px solid #888;
  }

  .data {
    padding-left: 4px;
    border-right: 2px solid #eee;
    border-bottom: 2px solid #eee;
    line-height: 16px;
    color: #333;
  }

  .data.cur {
    background: #e4e4f0;
  }

  .right {
    flex: 1;
    min-width: 0;
    margin-left: 7px;
    margin-right: 6px;
    display: flex;
    flex-direction: column;
  }

  .view {
    height: 556px;
    flex: none;
    background: #fff;
    border-left: 2px solid #9a9a9a;
    box-sizing: border-box;
    display: flex;
    flex-direction: column;
  }

  .view-tools {
    height: 23px;
    flex: none;
    display: flex;
    align-items: center;
    background: linear-gradient(#f8f8f8, #f0f0f0);
    box-sizing: border-box;
    padding-top: 2px;
  }

  .vt {
    display: flex;
    align-items: center;
    justify-content: center;
    flex: none;
  }

  .vt-first {
    width: 23px;
    margin-left: 3px;
  }

  .vsep {
    width: 1px;
    height: 18px;
    background: #999;
    flex: none;
    margin: 0 4px;
  }

  .vt-on {
    width: 22px;
    height: 21px;
    background: #e6e6e6;
  }

  .vt-feet {
    width: 20px;
    margin-left: 2px;
  }

  .vsep-cubes {
    margin-left: 3px;
    margin-right: 6px;
  }

  .vt-cube {
    width: 16px;
    margin-right: 7.200px;
  }

  .vsep-lines {
    margin-left: 0;
    margin-right: 6px;
  }

  .vt-lines {
    width: 20px;
    margin-right: 2px;
  }

  .vt-hill {
    width: 18px;
    margin-left: 1px;
  }

  .canvas {
    flex: 1;
    min-height: 0;
    overflow: hidden;
    border-bottom: 1px solid #bbb;
  }

  .canvas svg {
    display: block;
  }

  .bottom {
    position: relative;
    margin-top: 7px;
    height: 262px;
    flex: none;
    box-sizing: border-box;
    border: 1px solid #c8c8d0;
    border-top: 2px solid #8f8f97;
    border-left: 2px solid #9a9a9a;
    padding: 4px 0 0 5px;
    background: #ecedf7;
  }

  .tabs {
    height: 22px;
  }

  .tab {
    width: 85px;
    height: 23px;
    box-sizing: border-box;
    background: #fff;
    border: 1px solid #111;
    border-bottom: none;
    border-radius: 3px 3px 0 0;
    text-align: center;
    line-height: 21px;
    position: relative;
    z-index: 1;
  }

  .pane {
    width: 1061px;
    height: 228px;
    box-sizing: border-box;
    border: 1.500px solid #111;
    background: #fff;
    padding: 6px 6px 0 6px;
  }

  .side-strip {
    position: absolute;
    right: 7px;
    top: 3px;
    bottom: 2px;
    width: 3px;
    background: #b8b8c0;
  }

  .tbl {
    border-top: 1px solid #aaa;
    border-left: 1px solid #888;
    height: 220px;
    box-sizing: border-box;
  }

  .trow {
    display: flex;
    height: 17px;
  }

  .thead {
    height: 19px;
  }

  .tc {
    box-sizing: border-box;
    flex: none;
    white-space: pre;
  }

  .thead .tc {
    background: linear-gradient(#fff 40%, #e2e2e2);
    border-right: 1px solid #999;
    border-bottom: 1px solid #888;
    text-align: center;
    line-height: 18px;
  }

  .r0 {
    width: 20px;
  }

  .r1 {
    width: 66px;
  }

  .r2 {
    width: 103px;
  }

  .r3 {
    width: 451px;
  }

  .r4 {
    width: 36px;
  }

  .r5 {
    width: 127px;
  }

  .r6 {
    width: 66px;
  }

  .r7 {
    width: 67px;
  }

  .rh {
    border-right: 1px solid #888;
    border-bottom: 1px solid #aaa;
    text-align: center;
    line-height: 16px;
  }

  .d {
    padding: 0 3px;
    border-right: 1px solid #e8e8e8;
    border-bottom: 1px solid #e8e8e8;
    line-height: 16px;
    color: #333;
  }

  .trow.cur .d {
    background: #d9d9ec;
  }

  .d.under {
    text-decoration: underline;
  }

  .d.num {
    text-align: right;
  }

  .trow .d.focus {
    outline: 2px solid #111;
    outline-offset: -2px;
  }

  /* status */
  .status {
    height: 15px;
    flex: none;
    display: flex;
    justify-content: flex-end;
    background: #f0f0f0;
    border-top: 1px solid #999;
    box-sizing: border-box;
    padding-right: 2px;
    gap: 3px;
  }

  .st {
    box-sizing: border-box;
    border-left: 1px solid #999;
    text-align: center;
    line-height: 12px;
    white-space: pre;
    height: 14px;
  }

  .st1 {
    width: 94px;
  }

  .st2 {
    width: 78px;
  }

  .st3 {
    width: 79px;
  }
</style>
